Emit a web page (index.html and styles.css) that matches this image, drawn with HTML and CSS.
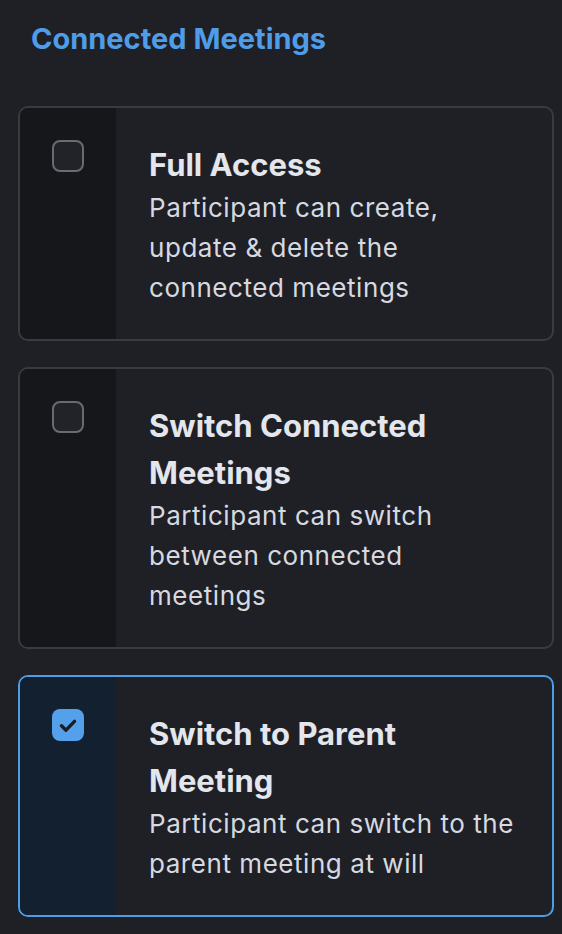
FILE: index.html
```html
<!DOCTYPE html>
<html>
<head>
<meta charset="utf-8">
<link rel="stylesheet" href="styles.css">
</head>
<body>
<div class="page">
  <h1 class="heading">Connected Meetings</h1>
  <div class="list">
    <div class="card">
      <div class="side"><span class="box"></span></div>
      <div class="body">
        <div class="title">Full Access</div>
        <div class="desc">Participant can create, update &amp; delete the connected meetings</div>
      </div>
    </div>
    <div class="card">
      <div class="side"><span class="box"></span></div>
      <div class="body">
        <div class="title">Switch Connected Meetings</div>
        <div class="desc">Participant can switch between connected meetings</div>
      </div>
    </div>
    <div class="card selected">
      <div class="side"><span class="box checked"><svg viewBox="0 0 32 32" width="32" height="32"><path d="M9.5 16.8 L14 21.2 L22.5 12.3" fill="none" stroke="#1c1d22" stroke-width="3.4" stroke-linecap="round" stroke-linejoin="round"/></svg></span></div>
      <div class="body">
        <div class="title">Switch to Parent Meeting</div>
        <div class="desc">Participant can switch to the parent meeting at will</div>
      </div>
    </div>
  </div>
</div>
</body>
</html>
```
FILE: styles.css
```css
html, body {
  margin: 0;
  padding: 0;
  background: #1f2025;
}
.page {
  padding: 19px 8px 18px 18px;
  font-family: Inter, "Noto Sans", sans-serif;
}
.heading {
  margin: 0 0 47px 13px;
  font-size: 29px;
  line-height: 40px;
  font-weight: 700;
  color: #4f9de8;
}
.list {
  display: flex;
  flex-direction: column;
  gap: 26px;
}
.card {
  display: flex;
  border: 2px solid #3a3b41;
  border-radius: 10px;
  overflow: hidden;
  background: #1f2025;
}
.side {
  width: 96px;
  flex: none;
  background: #16171b;
  display: flex;
  justify-content: center;
  align-items: flex-start;
  padding-top: 32px;
}
.box {
  width: 32px;
  height: 32px;
  box-sizing: border-box;
  border: 2px solid #6a6b70;
  border-radius: 8px;
  background: #222328;
  display: block;
}
.box.checked {
  border: none;
  background: #55a0ea;
}
.box svg { display: block; }
.body {
  flex: 1;
  padding: 33px 33px 31px 33px;
}
.title {
  font-size: 31px;
  line-height: 47px;
  font-weight: 700;
  color: #e3e6ed;
}
.desc {
  font-size: 26px;
  line-height: 40px;
  letter-spacing: 0.55px;
  color: #d6d9e0;
}
.card.selected {
  border-color: #4d9de8;
}
.card.selected .side {
  background: #122030;
}
```
